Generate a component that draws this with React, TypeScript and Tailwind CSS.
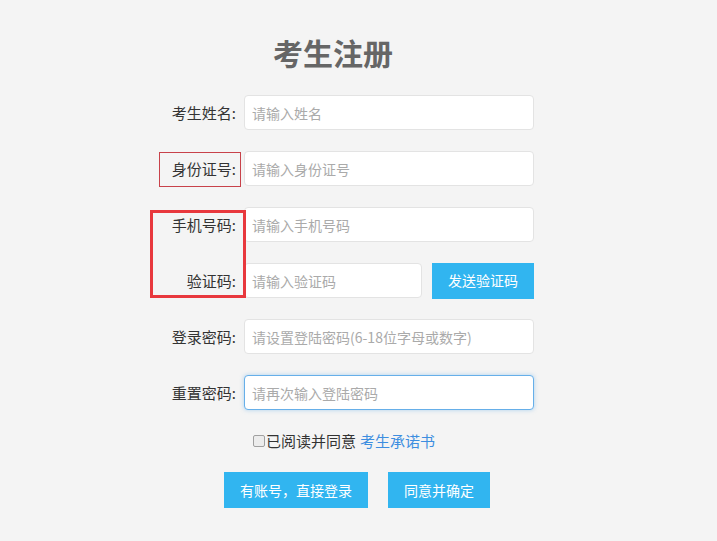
import React from "react";

const font = "font-['Microsoft_YaHei','Noto_Sans_CJK_SC',sans-serif]";

function Row({ label, placeholder, focused }: { label: string; placeholder: string; focused?: boolean }) {
  return (
    <div className="flex items-center h-[35px]">
      <div className="w-[236px] text-right text-[15px] leading-[20px] text-[#333]">{label}:</div>
      <input
        readOnly
        placeholder={placeholder}
        className={
          "ml-[8px] w-[290px] h-[35px] rounded-[4px] bg-white px-[7px] text-[14px] text-[#333] placeholder:text-[#aaa] outline-none " +
          (focused
            ? "border border-[#66afe9] shadow-[0_0_4px_rgba(102,175,233,0.5)]"
            : "border border-[#e3e3e3]")
        }
      />
    </div>
  );
}

export default function App() {
  return (
    <div className={`relative w-full min-h-[541px] bg-[#f4f4f4] ${font}`}>
      <div className="pt-[34px] pl-[273px] h-[74px]">
        <h1 className="text-[30px] leading-[36px] font-bold text-[#666]">考生注册</h1>
      </div>
      <div className="mt-[21px] flex flex-col gap-[21px]">
        <Row label="考生姓名" placeholder="请输入姓名" />
        <Row label="身份证号" placeholder="请输入身份证号" />
        <Row label="手机号码" placeholder="请输入手机号码" />
        <div className="flex items-center h-[35px]">
          <div className="w-[236px] text-right text-[15px] leading-[20px] text-[#333]">验证码:</div>
          <input
            readOnly
            placeholder="请输入验证码"
            className="ml-[8px] w-[178px] h-[35px] rounded-[4px] bg-white px-[7px] text-[14px] placeholder:text-[#aaa] outline-none border border-[#e3e3e3]"
          />
          <button className="ml-[10px] w-[102px] h-[36px] bg-[#31b5f0] text-white text-[14px]">发送验证码</button>
        </div>
        <Row label="登录密码" placeholder="请设置登陆密码(6-18位字母或数字)" />
        <Row label="重置密码" placeholder="请再次输入登陆密码" focused />
      </div>
      <div className="mt-[20px] h-[22px] pl-[253px] flex items-center text-[15px] leading-[20px]">
        <span className="inline-block w-[12px] h-[12px] border border-[#a0a0a0] rounded-[2px] bg-[#ececec] mr-[1px]" />
        <span className="text-[#333]">已阅读并同意</span>
        <span className="ml-[4px] text-[#3d8ee0]">考生承诺书</span>
      </div>
      <div className="mt-[20px] pl-[224px] flex gap-[20px]">
        <button className="w-[144px] h-[36px] bg-[#31b5f0] text-white text-[14px]">有账号，直接登录</button>
        <button className="w-[102px] h-[36px] bg-[#31b5f0] text-white text-[14px]">同意并确定</button>
      </div>
      <div className="absolute left-[159px] top-[152px] w-[82px] h-[35px] border border-[#c8424a]" />
      <div className="absolute left-[150px] top-[210px] w-[96px] h-[88px] border-[3px] border-[#e8383d]" />
    </div>
  );
}
